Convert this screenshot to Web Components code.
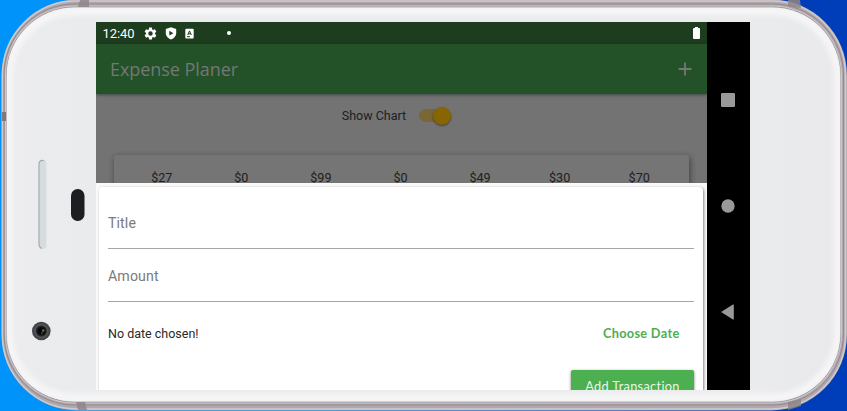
<!DOCTYPE html>
<html lang="en">
<head>
<meta charset="utf-8">
<title>Expense Planer</title>
<style>
html,body{margin:0;width:847px;height:411px;overflow:hidden}
body{font-family:Roboto,sans-serif;background:linear-gradient(90deg,#0094fa 0,#0091f7 35%,#0040bb 85%,#003db8)}
</style>
</head>
<body>
<phone-frame>
  <android-screen>
    <status-bar slot="top" time="12:40"></status-bar>
    <app-bar slot="top" heading="Expense Planer"></app-bar>
    <chart-page slot="page"></chart-page>
    <transaction-sheet slot="sheet">
      <text-input>Title</text-input>
      <text-input>Amount</text-input>
      <date-row>No date chosen!</date-row>
      <raised-button>Add Transaction</raised-button>
    </transaction-sheet>
    <nav-buttons slot="nav"></nav-buttons>
  </android-screen>
</phone-frame>
<script>
const define = (name, html) => {
  const template = document.createElement('template');
  customElements.define(name, class extends HTMLElement {
    constructor() {
      super();
      template.innerHTML = html;
      this.attachShadow({mode: 'open'}).append(template.content.cloneNode(true));
    }
    connectedCallback() {
      this.shadowRoot.querySelectorAll('[data-attr]').forEach(el => {
        el.textContent = this.getAttribute(el.dataset.attr);
      });
    }
  });
};

define('phone-frame', `<style>
:host{display:block;position:relative;width:847px;height:411px;overflow:hidden}
.body{position:absolute;inset:0}
.content{position:relative;padding:22px 97px 21px 96px}
</style>
<svg class="body" viewBox="0 0 847 411" width="847" height="411">
  <defs>
    <linearGradient id="face" x1="0" x2="1"><stop stop-color="#ececee"/><stop offset=".1" stop-color="#e9ebec"/><stop offset=".9" stop-color="#eaebed"/><stop offset="1" stop-color="#e9e9eb"/></linearGradient>
    <filter id="soft" x="-10%" y="-10%" width="120%" height="120%"><feGaussianBlur stdDeviation="2.5"/></filter>
    <clipPath id="inner"><rect x="6.5" y="7.5" width="834" height="394" rx="68"/></clipPath>
    <pattern id="mesh" width="2" height="2" patternUnits="userSpaceOnUse"><path d="M0 0h1v1H0z" fill="#b9c0c5" opacity=".3"/></pattern>
  </defs>
  <rect x="1.5" y="-.5" width="845.5" height="411" rx="76" fill="#b0a8ac"/>
  <rect x="2.5" y="1" width="843" height="408" rx="74" fill="none" stroke="#d0c9cd" stroke-width="1.5"/>
  <rect x="4" y="4" width="839.5" height="401" rx="71" fill="none" stroke="#93898e"/>
  <rect x="5" y="5.5" width="837" height="398" rx="70" fill="#cec7cb"/>
  <rect x="6.5" y="7" width="834" height="395" rx="68" fill="url(#face)" stroke="#8e888c" stroke-width=".8"/>
  <g clip-path="url(#inner)"><rect x="9" y="11" width="829" height="387" rx="66" fill="none" stroke="#f6f6f7" stroke-width="8" filter="url(#soft)"/></g>
  <path d="M80 0h9v7h-11zM788 0h12l1 8-13-2zM76 402h9l2 8H78zM788 402l13-3v7l-13 4z" fill="#8e868a" opacity=".85"/>
  <path d="M2 112h4v9H2z" fill="#7f797d"/>
  <rect x="38.5" y="160" width="8" height="89" rx="3.5" fill="#dadee1"/>
  <rect x="40" y="161" width="6" height="87" rx="3" fill="url(#mesh)"/>
  <path d="M44 160.500q-5-1-5 4v79q0 4 3 5" fill="none" stroke="#a2a9af" stroke-width="1.1"/>
  <rect x="71" y="189" width="13.5" height="32" rx="6.7" fill="#1c1e22"/>
  <circle cx="41.3" cy="331" r="9.3" fill="#44454a"/><circle cx="41.3" cy="331" r="7.2" fill="#55565b"/>
  <circle cx="41.3" cy="331" r="5.5" fill="#202126"/><circle cx="41.5" cy="331" r="3.8" fill="#08090c"/>
  <circle cx="43.2" cy="330.5" r="1.2" fill="#7b7640"/><circle cx="42" cy="333" r=".8" fill="#716d3d"/>
</svg>
<div class="content"><slot></slot></div>`);

define('android-screen', `<style>
:host{display:flex;width:654px;height:368px;overflow:hidden;background:#000}
.app{width:611px;height:368px;display:flex;flex-direction:column;background:#737373}
</style>
<div class="app"><slot name="top"></slot><slot name="page"></slot><slot name="sheet"></slot></div><slot name="nav"></slot>`);

define('status-bar', `<style>
:host{display:flex;align-items:center;flex:none;height:22px;box-sizing:border-box;background:#1e3c1e;color:#fff;padding:0 7px 0 6.5px;font-size:13px}
.time{width:41.5px;line-height:22px;white-space:nowrap;padding-top:1px;letter-spacing:-.1px}
svg{display:block}.shield{margin-left:7.5px}.card{margin-left:8.5px}
.dot{width:4px;height:4px;border-radius:2px;background:#fff;margin-left:33px}.battery{margin-left:auto}
</style>
<span class="time" data-attr="time"></span>
<svg class="gear" width="13" height="13" viewBox="1.5 1.5 21 21"><path fill="#fff" d="M19.14 12.94c.04-.3.06-.61.06-.94s-.02-.64-.07-.94l2.03-1.58a.49.49 0 0 0 .12-.61l-1.92-3.32a.49.49 0 0 0-.59-.22l-2.39.96a7 7 0 0 0-1.62-.94l-.36-2.54A.48.48 0 0 0 13.92 2.4h-3.84a.48.48 0 0 0-.48.41l-.36 2.54c-.59.24-1.13.57-1.62.94l-2.39-.96a.49.49 0 0 0-.59.22L2.72 8.87a.49.49 0 0 0 .12.61l2.03 1.58a6 6 0 0 0 0 1.88l-2.03 1.58a.49.49 0 0 0-.12.61l1.92 3.32c.12.22.37.29.59.22l2.39-.96c.5.38 1.03.7 1.62.94l.36 2.54c.05.24.24.41.48.41h3.84c.24 0 .44-.17.48-.41l.36-2.54a7 7 0 0 0 1.62-.94l2.39.96c.22.07.47 0 .59-.22l1.92-3.32a.49.49 0 0 0-.12-.61zM12 15.6a3.6 3.6 0 1 1 0-7.2 3.6 3.6 0 0 1 0 7.2"/></svg>
<svg class="shield" width="12" height="13" viewBox="0 0 12 13"><path fill="#fff" d="M6 .3 11.200 2v4.300c0 2.900-2.200 5.200-5.200 6.300C3 11.500.8 9.200.8 6.300V2z"/><path fill="#1e3c1e" d="M4.300 3.800v4.800L8.400 6.200z"/></svg>
<svg class="card" width="9" height="11" viewBox="0 0 9 11"><rect x=".3" y=".8" width="8.400" height="9.600" rx="1" fill="#fff"/><path d="M2.700 7 4.500 2.900 6.300 7M3.300 5.800h2.400M2 8.700h3" fill="none" stroke="#1e3c1e" stroke-width="1"/></svg>
<i class="dot"></i>
<svg class="battery" width="7" height="12" viewBox="0 0 7 12"><path fill="#fff" d="M2 0h3v1h1q1 0 1 1v9q0 1-1 1H1q-1 0-1-1V2q0-1 1-1h1z"/></svg>`);

define('app-bar', `<style>
:host{display:flex;position:relative;align-items:center;justify-content:space-between;flex:none;height:50px;box-sizing:border-box;padding:0 15px 0 14px;background:#235228;color:#747774;box-shadow:0 1px 3px #0006;font-family:"Open Sans",sans-serif;font-size:18px}
span{white-space:nowrap;letter-spacing:-.05px}
</style><span data-attr="heading"></span>
<svg width="14" height="14" viewBox="0 0 14 14"><path d="M7 .6v12.800M.6 7h12.800" stroke="#747774" stroke-width="1.8"/></svg>`);

define('toggle-switch', `<style>
:host{display:flex;align-items:center;width:32px;height:20px}
.track{display:flex;align-items:center;justify-content:flex-end;width:32px;height:13px;border-radius:7px;background:#7a6737}
.thumb{width:18px;height:18px;border-radius:50%;background:#886500;box-shadow:0 1px 2px #0007;flex:none}
</style><div class="track"><div class="thumb"></div></div>`);

define('chart-page', `<style>
:host{display:block;height:89px;flex:none;overflow:hidden;color:#202020}
.row{display:flex;align-items:center;justify-content:center;height:43px;gap:13px;font-size:12.5px;padding-right:10px}
.card{display:grid;grid-template-columns:repeat(7,1fr);margin:18px 18px 0;height:80px;box-sizing:border-box;padding:15px 10px 0 8px;text-align:center;font-size:12.6px;line-height:15px;background:#757575;border-radius:3px;box-shadow:1px 2px 6px #0007}
</style>
<div class="row"><span>Show Chart</span><toggle-switch></toggle-switch></div>
<div class="card"><span>$27</span><span>$0</span><span>$99</span><span>$0</span><span>$49</span><span>$30</span><span>$70</span></div>`);

define('transaction-sheet', `<style>
:host{display:block;position:relative;height:207px;flex:none;background:#fafafa;overflow:hidden}
.card{display:flex;flex-direction:column;margin:4px 4px 0 3px;height:220px;padding:9px 9px 0;box-sizing:border-box;background:#fff;border-radius:4px;box-shadow:1px 1px 3px #0007}
</style><div class="card"><slot></slot></div>`);

define('text-input', `<style>
:host{display:flex;align-items:center;flex:none;height:53px;box-sizing:border-box;padding-top:2px;border-bottom:1px solid #a6a6a6;color:#7b7b7b;font-size:14.2px;line-height:18px;letter-spacing:.1px}
</style><span><slot></slot></span>`);

define('date-row', `<style>
:host{display:flex;align-items:center;justify-content:space-between;flex:none;height:62px;padding-right:14.5px;color:#292929;font-size:12.5px}
b{color:#4caf50;font:700 12.800px Lato,sans-serif;letter-spacing:.28px}
</style><span><slot></slot></span><b>Choose Date</b>`);

define('raised-button', `<style>
:host{display:flex;align-items:center;justify-content:center;align-self:flex-end;flex:none;width:123px;height:32px;margin-top:6px;border-radius:2px;background:#4caf50;color:#e9f5e9;box-shadow:0 1px 3px #0008;font:400 12.800px Lato,sans-serif;letter-spacing:.3px;white-space:nowrap}
</style><slot></slot>`);

define('nav-buttons', `<style>
:host{display:flex;flex-direction:column;justify-content:space-between;align-items:center;width:41px;padding-right:2px;height:227px;padding-top:71px;background:#000}
svg{display:block}
</style>
<svg width="14" height="14"><rect width="14" height="14" rx="1" fill="#999"/></svg>
<svg width="14" height="14"><circle cx="7" cy="7" r="6.700" fill="#999"/></svg>
<svg width="14" height="16"><path d="M0 8 12 .6q.8-.3.8.5v13.800q0 .8-.8.5z" fill="#999"/></svg>`);
</script>
</body>
</html>
